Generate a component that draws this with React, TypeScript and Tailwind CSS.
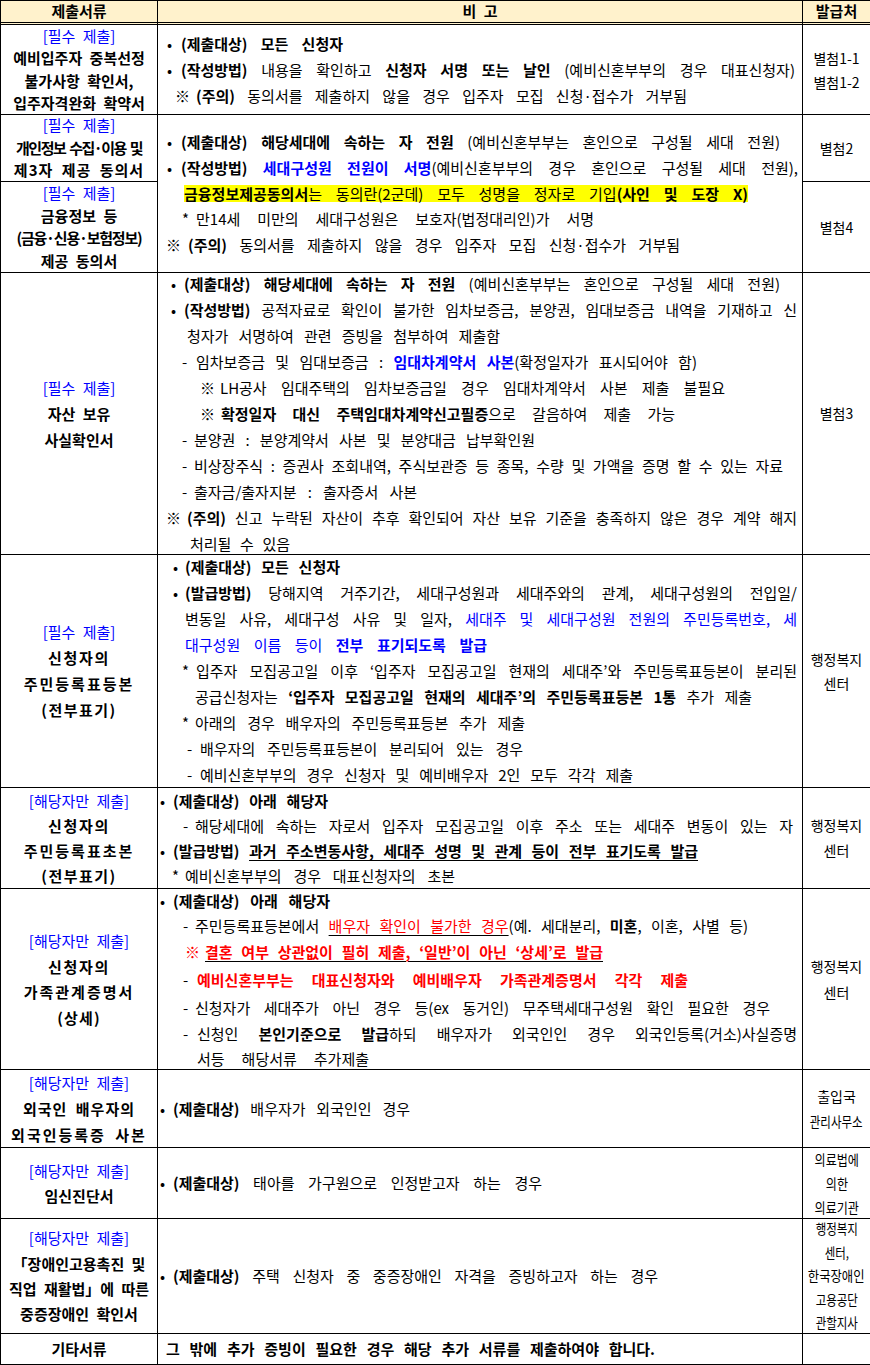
import React from "react";

type P = { c?: string; children?: React.ReactNode };

const J = "[text-align-last:justify] [text-justify:inter-word]";

function B({ c = "", children }: P) {
  return <span className={"font-bold " + c}>{children}</span>;
}
function JL({ c = "", children }: P) {
  return <div className={"whitespace-nowrap " + J + " " + c}>{children}</div>;
}
function Pf({ s, w }: { s: string; w: string }) {
  return <span className={"inline-block " + w}>{s}</span>;
}

const C1 =
  "border-r border-b border-black flex flex-col justify-center items-center text-center font-bold text-[15px] [word-spacing:4px]";
const C2 =
  "border-r border-b border-black flex flex-col justify-center text-[15px] [word-spacing:4px]";
const C3 =
  "border-b border-black flex flex-col justify-center items-center text-center text-[14px]";
const HD =
  "border-b-[3px] border-double border-black bg-[#fff2cc] flex items-center justify-center font-bold text-[15px] [word-spacing:4px]";
const TAG = "font-normal text-[#0000ff]";
const BL = "text-[#0000ff]";
const RD = "text-[#ff0000]";
const UL = "underline decoration-black decoration-1 underline-offset-[3px]";

export default function App() {
  return (
    <div className="w-[870px] bg-white font-['Noto_Sans_CJK_KR',sans-serif] text-black">
      <div className="grid grid-cols-[157px_645px_67px] grid-rows-[24px_90px_67px_91px_282px_233px_101px_181px_78px_71px_115px_31px] border-t border-l border-black">
        {/* header */}
        <div className={HD + " border-r"}>제출서류</div>
        <div className={HD + " border-r"}>비 고</div>
        <div className={HD}>발급처</div>

        {/* row 1 */}
        <div className={C1 + " leading-[22.5px]"}>
          <div className={TAG}>[필수 제출]</div>
          <div>예비입주자 중복선정</div>
          <div>불가사항 확인서,</div>
          <div>입주자격완화 확약서</div>
        </div>
        <div className={C2 + " leading-[26px]"}>
          <JL c="ml-[9px] w-[176px]"><Pf s="•" w="w-[14px]" /><B>(제출대상) 모든 신청자</B></JL>
          <JL c="ml-[9px] w-[628px]"><Pf s="•" w="w-[14px]" /><B>(작성방법)</B> 내용을 확인하고 <B>신청자 서명 또는 날인</B> (예비신혼부부의 경우 대표신청자)</JL>
          <JL c="ml-[17px] w-[512px]"><Pf s="※" w="w-[21px]" /><B>(주의)</B> 동의서를 제출하지 않을 경우 입주자 모집 신청·접수가 거부됨</JL>
        </div>
        <div className={C3 + " leading-[24px]"}>
          <div>별첨1-1</div>
          <div>별첨1-2</div>
        </div>

        {/* row 2 */}
        <div className={C1 + " leading-[22.5px]"}>
          <div className={TAG}>[필수 제출]</div>
          <div className="tracking-[-1.5px] [word-spacing:2px]">개인정보 수집·이용 및</div>
          <div className="tracking-[1px]">제3자 제공 동의서</div>
        </div>
        <div className={C2 + " row-span-2 leading-[25.8px]"}>
          <JL c="ml-[9px] w-[613px]"><Pf s="•" w="w-[14px]" /><B>(제출대상) 해당세대에 속하는 자 전원</B> (예비신혼부부는 혼인으로 구성될 세대 전원)</JL>
          <JL c="ml-[9px] w-[631px]"><Pf s="•" w="w-[14px]" /><B>(작성방법)</B> <B c={BL}>세대구성원 전원이 서명</B>(예비신혼부부의 경우 혼인으로 구성될 세대 전원),</JL>
          <div className="h-[25.8px] flex items-center">
            <JL c="ml-[26px] w-[564px] leading-[17px] bg-[#ffff00]"><B>금융정보제공동의서</B>는 동의란(2군데) 모두 성명을 정자로 기입<B>(사인 및 도장 X)</B></JL>
          </div>
          <JL c="ml-[24px] w-[412px]"><Pf s="*" w="w-[14px]" />만14세 미만의 세대구성원은 보호자(법정대리인)가 서명</JL>
          <JL c="ml-[8px] w-[514px]"><Pf s="※" w="w-[22px]" /><B>(주의)</B> 동의서를 제출하지 않을 경우 입주자 모집 신청·접수가 거부됨</JL>
        </div>
        <div className={C3}>별첨2</div>

        {/* row 3 */}
        <div className={C1 + " leading-[22.5px]"}>
          <div className={TAG}>[필수 제출]</div>
          <div>금융정보 등</div>
          <div className="tracking-[-1.2px] [word-spacing:2px]">(금융·신용·보험정보)</div>
          <div>제공 동의서</div>
        </div>
        <div className={C3}>별첨4</div>

        {/* row 4 */}
        <div className={C1 + " leading-[26px]"}>
          <div className={TAG}>[필수 제출]</div>
          <div>자산 보유</div>
          <div>사실확인서</div>
        </div>
        <div className={C2 + " leading-[26px]"}>
          <JL c="ml-[13px] w-[609px]"><Pf s="•" w="w-[13px]" /><B>(제출대상) 해당세대에 속하는 자 전원</B> (예비신혼부부는 혼인으로 구성될 세대 전원)</JL>
          <JL c="ml-[13px] w-[626px]"><Pf s="•" w="w-[13px]" /><B>(작성방법)</B> 공적자료로 확인이 불가한 임차보증금, 분양권, 임대보증금 내역을 기재하고 신</JL>
          <JL c="ml-[29px] w-[313px]">청자가 서명하여 관련 증빙을 첨부하여 제출함</JL>
          <JL c="ml-[24px] w-[515px]"><Pf s="-" w="w-[14px]" />임차보증금 및 임대보증금 : <B c={BL}>임대차계약서 사본</B>(확정일자가 표시되어야 함)</JL>
          <JL c="ml-[42px] w-[525px]"><Pf s="※" w="w-[20px]" />LH공사 임대주택의 임차보증금일 경우 임대차계약서 사본 제출 불필요</JL>
          <JL c="ml-[42px] w-[475px]"><Pf s="※" w="w-[21px]" /><B>확정일자 대신 주택임대차계약신고필증</B>으로 갈음하여 제출 가능</JL>
          <JL c="ml-[24px] w-[353px]"><Pf s="-" w="w-[12px]" />분양권 : 분양계약서 사본 및 분양대금 납부확인원</JL>
          <JL c="ml-[24px] w-[601px]"><Pf s="-" w="w-[12px]" />비상장주식 : 증권사 조회내역, 주식보관증 등 종목, 수량 및 가액을 증명 할 수 있는 자료</JL>
          <JL c="ml-[24px] w-[235px]"><Pf s="-" w="w-[12px]" />출자금/출자지분 : 출자증서 사본</JL>
          <JL c="ml-[8px] w-[631px]"><Pf s="※" w="w-[21px]" /><B>(주의)</B> 신고 누락된 자산이 추후 확인되어 자산 보유 기준을 충족하지 않은 경우 계약 해지</JL>
          <JL c="ml-[32px] w-[100px]">처리될 수 있음</JL>
        </div>
        <div className={C3}>별첨3</div>

        {/* row 5 */}
        <div className={C1 + " leading-[26px]"}>
          <div className={TAG}>[필수 제출]</div>
          <div className="tracking-[1.75px]">신청자의</div>
          <div className="tracking-[2px]">주민등록표등본</div>
          <div className="tracking-[1.5px]">(전부표기)</div>
        </div>
        <div className={C2 + " leading-[26px]"}>
          <JL c="ml-[15px] w-[167px]"><Pf s="•" w="w-[12px]" /><B>(제출대상) 모든 신청자</B></JL>
          <JL c="ml-[15px] w-[624px]"><Pf s="•" w="w-[12px]" /><B>(발급방법)</B> 당해지역 거주기간, 세대구성원과 세대주와의 관계, 세대구성원의 전입일/</JL>
          <JL c="ml-[27px] w-[612px]">변동일 사유, 세대구성 사유 및 일자, <span className={BL}>세대주 및 세대구성원 전원의 주민등록번호, 세</span></JL>
          <JL c="ml-[27px] w-[302px]"><span className={BL}>대구성원 이름 등이 <B>전부 표기되도록 발급</B></span></JL>
          <JL c="ml-[24px] w-[615px]"><Pf s="*" w="w-[14px]" />입주자 모집공고일 이후 ‘입주자 모집공고일 현재의 세대주’와 주민등록표등본이 분리된</JL>
          <JL c="ml-[37px] w-[557px]">공급신청자는 <B>‘입주자 모집공고일 현재의 세대주’의 주민등록표등본 1통</B> 추가 제출</JL>
          <JL c="ml-[24px] w-[343px]"><Pf s="*" w="w-[13px]" />아래의 경우 배우자의 주민등록표등본 추가 제출</JL>
          <JL c="ml-[29px] w-[336px]"><Pf s="-" w="w-[13px]" />배우자의 주민등록표등본이 분리되어 있는 경우</JL>
          <JL c="ml-[29px] w-[446px]"><Pf s="-" w="w-[13px]" />예비신혼부부의 경우 신청자 및 예비배우자 2인 모두 각각 제출</JL>
        </div>
        <div className={C3 + " leading-[24px]"}>
          <div>행정복지</div>
          <div>센터</div>
        </div>

        {/* row 6 */}
        <div className={C1 + " leading-[25px]"}>
          <div className={TAG}>[해당자만 제출]</div>
          <div className="tracking-[1.75px]">신청자의</div>
          <div className="tracking-[2px]">주민등록표초본</div>
          <div className="tracking-[1.5px]">(전부표기)</div>
        </div>
        <div className={C2 + " leading-[25px]"}>
          <JL c="ml-[2px] w-[168px]"><Pf s="•" w="w-[13px]" /><B>(제출대상) 아래 해당자</B></JL>
          <JL c="ml-[25px] w-[610px]"><Pf s="-" w="w-[12px]" />해당세대에 속하는 자로서 입주자 모집공고일 이후 주소 또는 세대주 변동이 있는 자</JL>
          <JL c="ml-[2px] w-[538px]"><Pf s="•" w="w-[13px]" /><B>(발급방법) <span className={UL}>과거 주소변동사항, 세대주 성명 및 관계 등이 전부 표기도록 발급</span></B></JL>
          <JL c="ml-[14px] w-[283px]"><Pf s="*" w="w-[13px]" />예비신혼부부의 경우 대표신청자의 초본</JL>
        </div>
        <div className={C3 + " leading-[25px]"}>
          <div>행정복지</div>
          <div>센터</div>
        </div>

        {/* row 7 */}
        <div className={C1 + " leading-[25.5px]"}>
          <div className={TAG}>[해당자만 제출]</div>
          <div className="tracking-[1.75px]">신청자의</div>
          <div className="tracking-[2px]">가족관계증명서</div>
          <div className="tracking-[1.2px]">(상세)</div>
        </div>
        <div className={C2}>
          <JL c="ml-[2px] w-[170px] leading-[25px]"><Pf s="•" w="w-[13px]" /><B>(제출대상) 아래 해당자</B></JL>
          <JL c="ml-[25px] w-[565px] leading-[26px]"><Pf s="-" w="w-[12px]" />주민등록표등본에서 <span className={RD + " " + UL}>배우자 확인이 불가한 경우</span>(예. 세대분리, <B>미혼</B>, 이혼, 사별 등)</JL>
          <JL c="ml-[27px] w-[418px] leading-[26px]"><B c={RD + " " + UL}><Pf s="※" w="w-[20px]" />결혼 여부 상관없이 필히 제출, ‘일반’이 아닌 ‘상세’로 발급</B></JL>
          <JL c="ml-[25px] w-[505px] leading-[29px]"><Pf s="-" w="w-[14px]" /><B c={RD}>예비신혼부부는 대표신청자와 예비배우자 가족관계증명서 각각 제출</B></JL>
          <JL c="ml-[25px] w-[587px] leading-[27px]"><Pf s="-" w="w-[12px]" />신청자가 세대주가 아닌 경우 등(ex 동거인) 무주택세대구성원 확인 필요한 경우</JL>
          <JL c="ml-[25px] w-[614px] leading-[26px]"><Pf s="-" w="w-[14px]" />신청인 <B>본인기준으로 발급</B>하되 배우자가 외국인인 경우 외국인등록(거소)사실증명</JL>
          <JL c="ml-[39px] w-[172px] leading-[24px]">서등 해당서류 추가제출</JL>
        </div>
        <div className={C3 + " leading-[26px]"}>
          <div>행정복지</div>
          <div>센터</div>
        </div>

        {/* row 8 */}
        <div className={C1 + " leading-[26px]"}>
          <div className={TAG}>[해당자만 제출]</div>
          <div className="tracking-[1px]">외국인 배우자의</div>
          <div className="tracking-[2px]">외국인등록증 사본</div>
        </div>
        <div className={C2 + " leading-[26px]"}>
          <JL c="ml-[2px] w-[250px]"><Pf s="•" w="w-[13px]" /><B>(제출대상)</B> 배우자가 외국인인 경우</JL>
        </div>
        <div className={C3 + " leading-[25px]"}>
          <div>출입국</div>
          <div className="scale-x-[0.82]">관리사무소</div>
        </div>

        {/* row 9 */}
        <div className={C1 + " leading-[25px]"}>
          <div className={TAG}>[해당자만 제출]</div>
          <div>임신진단서</div>
        </div>
        <div className={C2 + " leading-[26px]"}>
          <JL c="ml-[2px] w-[382px]"><Pf s="•" w="w-[13px]" /><B>(제출대상)</B> 태아를 가구원으로 인정받고자 하는 경우</JL>
        </div>
        <div className={C3 + " leading-[24px]"}>
          <div className="scale-x-[0.86]">의료법에</div>
          <div className="scale-x-[0.86]">의한</div>
          <div className="scale-x-[0.86]">의료기관</div>
        </div>

        {/* row 10 */}
        <div className={C1 + " leading-[25.3px]"}>
          <div className={TAG}>[해당자만 제출]</div>
          <div>「장애인고용촉진 및</div>
          <div>직업 재활법」에 따른</div>
          <div>중증장애인 확인서</div>
        </div>
        <div className={C2 + " leading-[26px]"}>
          <JL c="ml-[2px] w-[498px]"><Pf s="•" w="w-[13px]" /><B>(제출대상)</B> 주택 신청자 중 중증장애인 자격을 증빙하고자 하는 경우</JL>
        </div>
        <div className={C3 + " leading-[23.5px]"}>
          <div className="scale-x-[0.82]">행정복지</div>
          <div className="scale-x-[0.82]">센터,</div>
          <div className="scale-x-[0.88]">한국장애인</div>
          <div className="scale-x-[0.82]">고용공단</div>
          <div className="scale-x-[0.82]">관할지사</div>
        </div>

        {/* row 11 */}
        <div className={C1}>기타서류</div>
        <div className={C2 + " font-bold leading-[26px]"}>
          <JL c="ml-[8px] w-[489px]">그 밖에 추가 증빙이 필요한 경우 해당 추가 서류를 제출하여야 합니다.</JL>
        </div>
        <div className="border-b border-black"></div>
      </div>
    </div>
  );
}
